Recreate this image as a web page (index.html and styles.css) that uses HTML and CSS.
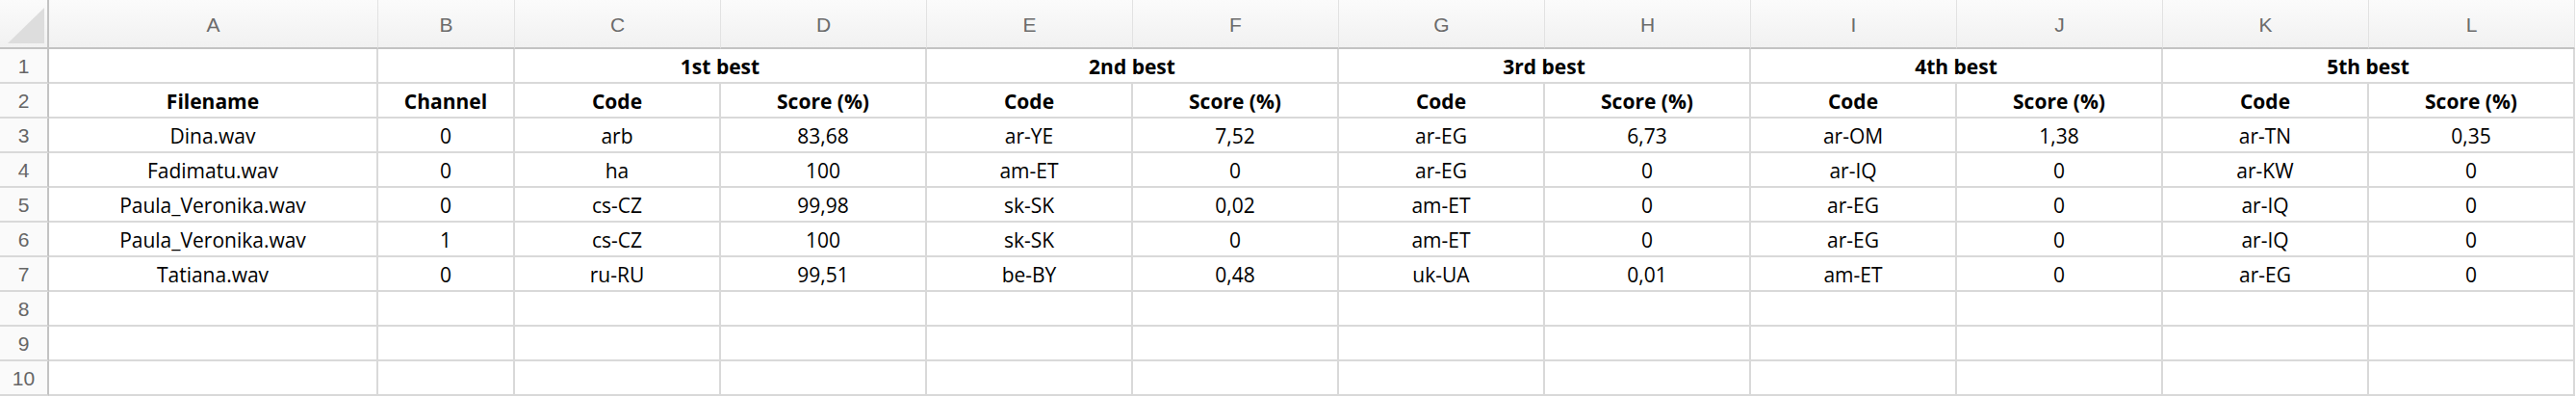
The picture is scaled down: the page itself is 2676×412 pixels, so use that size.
FILE: index.html
```html
<!DOCTYPE html>
<html lang="en">
<head>
  <meta charset="UTF-8" />
  <title>Language scores</title>
  <link rel="stylesheet" href="styles.css">
</head>
<body>
  <div class="sheet">
    <!-- column headers -->
    <div class="corner"><span class="corner-tri"></span></div>
    <div class="col-head">A</div>
    <div class="col-head">B</div>
    <div class="col-head">C</div>
    <div class="col-head">D</div>
    <div class="col-head">E</div>
    <div class="col-head">F</div>
    <div class="col-head">G</div>
    <div class="col-head">H</div>
    <div class="col-head">I</div>
    <div class="col-head">J</div>
    <div class="col-head">K</div>
    <div class="col-head">L</div>

    <!-- row 1 -->
    <div class="row-head">1</div>
    <div class="cell"></div>
    <div class="cell"></div>
    <div class="cell bold span2">1st best</div>
    <div class="cell bold span2">2nd best</div>
    <div class="cell bold span2">3rd best</div>
    <div class="cell bold span2">4th best</div>
    <div class="cell bold span2">5th best</div>

    <!-- row 2 -->
    <div class="row-head">2</div>
    <div class="cell bold">Filename</div>
    <div class="cell bold">Channel</div>
    <div class="cell bold">Code</div>
    <div class="cell bold">Score (%)</div>
    <div class="cell bold">Code</div>
    <div class="cell bold">Score (%)</div>
    <div class="cell bold">Code</div>
    <div class="cell bold">Score (%)</div>
    <div class="cell bold">Code</div>
    <div class="cell bold">Score (%)</div>
    <div class="cell bold">Code</div>
    <div class="cell bold">Score (%)</div>
  </div>

  <script>
    const rows = [
      ['Dina.wav', '0', 'arb', '83,68', 'ar-YE', '7,52', 'ar-EG', '6,73', 'ar-OM', '1,38', 'ar-TN', '0,35'],
      ['Fadimatu.wav', '0', 'ha', '100', 'am-ET', '0', 'ar-EG', '0', 'ar-IQ', '0', 'ar-KW', '0'],
      ['Paula_Veronika.wav', '0', 'cs-CZ', '99,98', 'sk-SK', '0,02', 'am-ET', '0', 'ar-EG', '0', 'ar-IQ', '0'],
      ['Paula_Veronika.wav', '1', 'cs-CZ', '100', 'sk-SK', '0', 'am-ET', '0', 'ar-EG', '0', 'ar-IQ', '0'],
      ['Tatiana.wav', '0', 'ru-RU', '99,51', 'be-BY', '0,48', 'uk-UA', '0,01', 'am-ET', '0', 'ar-EG', '0'],
      [], [], []
    ];

    // fill rows 3..10
    const sheet = document.querySelector('.sheet');
    rows.forEach((values, i) => {
      const head = document.createElement('div');
      head.className = 'row-head';
      head.innerText = i + 3;
      sheet.appendChild(head);
      for (let c = 0; c < 12; c++) {
        const cell = document.createElement('div');
        cell.className = 'cell';
        cell.innerText = values[c] || '';
        sheet.appendChild(cell);
      }
    });
  </script>
</body>
</html>
```

FILE: styles.css
```css
html, body {
  margin: 0;
  background: #ffffff;
  overflow: hidden;
}
.sheet {
  display: grid;
  grid-template-columns: 51px 342px 142px repeat(10, 214px);
  grid-template-rows: 51px repeat(10, 36px);
  font-family: 'Open Sans', sans-serif;
  font-size: 21px;
  color: #000000;
}
.corner {
  position: relative;
  background: linear-gradient(#fbfbfb, #f1f1f1);
  border-right: 2px solid #c3c3c3;
  border-bottom: 2px solid #c3c3c3;
  box-sizing: border-box;
}
.corner-tri {
  position: absolute;
  left: 8px;
  top: 8px;
  width: 38px;
  height: 37px;
  background: #dddddd;
  clip-path: polygon(100% 0, 100% 100%, 0 100%);
}
.col-head {
  background: linear-gradient(#fbfbfb, #f1f1f1);
  border-right: 1px solid #e2e2e2;
  border-bottom: 2px solid #c3c3c3;
  box-sizing: border-box;
  display: flex;
  align-items: center;
  justify-content: center;
  font-family: 'Liberation Sans', sans-serif;
  font-size: 21px;
  color: #6b6b6b;
  padding-top: 2px;
}
.row-head {
  background: #fafafa;
  border-right: 2px solid #c3c3c3;
  border-bottom: 2px solid #d9d9d9;
  box-sizing: border-box;
  display: flex;
  align-items: center;
  justify-content: center;
  font-family: 'Liberation Sans', sans-serif;
  font-size: 21px;
  color: #666666;
  padding-top: 2px;
}
.cell {
  border-right: 2px solid #d9d9d9;
  border-bottom: 2px solid #d9d9d9;
  box-sizing: border-box;
  display: flex;
  align-items: center;
  justify-content: center;
  white-space: nowrap;
  padding-top: 1px;
}
.bold {
  font-weight: bold;
}
.span2 {
  grid-column: span 2;
}
```
